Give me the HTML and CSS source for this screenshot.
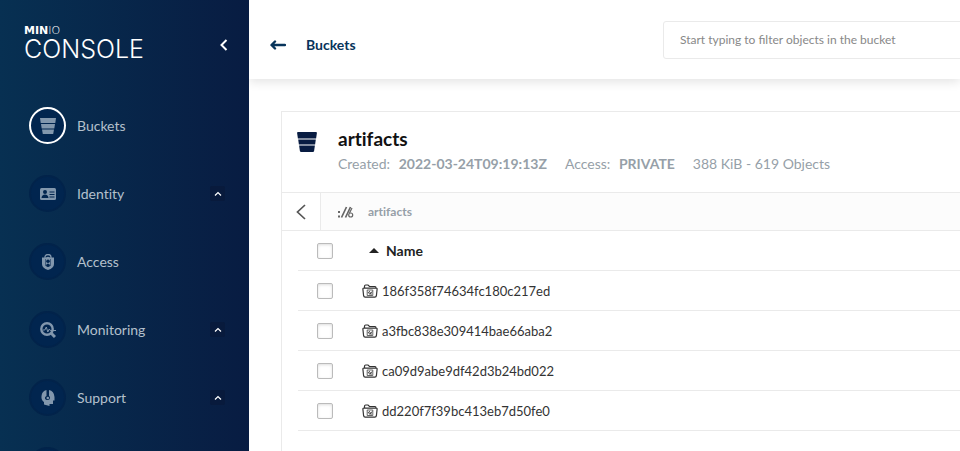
FILE: index.html
```html
<!DOCTYPE html>
<html lang="en">
<head>
<meta charset="utf-8">
<title>MinIO Console</title>
<link rel="stylesheet" href="styles.css">
</head>
<body>
<svg class="defs" aria-hidden="true">
  <symbol id="folder" viewBox="0 0 16 14">
    <path d="M2.500 4V2.200Q2.500 1 3.700 1H6l1.500 1.500h5.500Q14 2.500 14 4M1.800 4.200h12.400q1 0 .9 1l-.7 6.500q-.2 1.500-1.600 1.500H3.200q-1.400 0-1.600-1.500L.9 5.200q-.1-1 .9-1z" fill="none" stroke="#333" stroke-width="1.200"/>
    <path d="M5.200 6h5.600v5.500H5.200z" fill="none" stroke="#555" stroke-width=".9"/>
    <path d="M6 8l2 2.500L10 7.500M7 7l2.500 3.500" fill="none" stroke="#333" stroke-width=".9"/>
  </symbol>
  <symbol id="up" viewBox="0 0 8 6"><path d="M1 4.500L4 1.500l3 3" fill="none" stroke="#fff" stroke-width="1.200"/></symbol>
</svg>
<div class="app">
  <aside class="sidebar">
    <div class="brand">
      <div class="logo"><span class="logo-top"><b>MIN</b>IO</span><span class="logo-main">CONSOLE</span></div>
      <button class="collapse" aria-label="Collapse menu"><svg width="8" height="12" viewBox="0 0 8 12"><path d="M6.500 1L1.500 6l5 5" fill="none" stroke="#fff" stroke-width="2"/></svg></button>
    </div>
    <nav class="menu">
      <a class="item active" href="#"><span class="disc"><svg width="16" height="16" viewBox="0 0 16 16" fill="#8297ad"><path d="M0 0h16l-.7 5H.7zM1 6h14l-.7 4.500H1.700zM2 11.500h12L13.200 16H2.800z"/></svg></span><span class="label">Buckets</span></a>
      <a class="item" href="#"><span class="disc"><svg width="16" height="12" viewBox="0 0 16 12"><rect width="16" height="12" rx="1.500" fill="#8297ad"/><g fill="#01254f"><circle cx="5" cy="4" r="2"/><path d="M1.500 10q.3-3.500 3.500-3.500T8.500 10zM9.500 3.500h5v1h-5zM9.500 6h5v1h-5zM9.500 8.500h5v1h-5z"/></g></svg></span><span class="label">Identity</span><span class="toggle"><svg width="8" height="6"><use href="#up"/></svg></span></a>
      <a class="item" href="#"><span class="disc"><svg width="12" height="16" viewBox="0 0 12 16"><path d="M3 4V3a3 2.500 0 0 1 6 0v1" fill="none" stroke="#8297ad" stroke-width="1.300"/><path d="M0 3.500q3 .3 6-.8 3 1.100 6 .8V10q0 4-6 6-6-2-6-6z" fill="#8297ad"/><g fill="#01254f"><circle cx="6" cy="7.200" r="1.800"/><path d="M3.500 5H4v7h-.5zM8 5h.5v7H8zM4 12q0-2.500 2-2.500T8 12q-1 1-2 1t-2-1z"/></g></svg></span><span class="label">Access</span></a>
      <a class="item" href="#"><span class="disc"><svg width="16" height="16" viewBox="0 0 16 16" fill="none" stroke="#8297ad"><circle cx="7" cy="7" r="5.700" stroke-width="2.400"/><path d="M11 11l4 4" stroke-width="3"/><path d="M3 8h1.800l1.500-3 1.500 5L9.300 7l1 1.500H16" stroke-width="1"/></svg></span><span class="label">Monitoring</span><span class="toggle"><svg width="8" height="6"><use href="#up"/></svg></span></a>
      <a class="item" href="#"><span class="disc"><svg width="14" height="16" viewBox="0 0 14 16"><path d="M5.500 0v6q-2 .8-1.500 2.500.8 2 3 1.500 2.300-.4 2-2.500Q8.800 6.300 8 6V0q5 .8 5.500 7v3.500H12V14H8.500v2L3 14.500V12Q0 10 .5 6 1 1 5.500 0z" fill="#8297ad"/><circle cx="6.800" cy="8" r="1.300" fill="#8297ad"/></svg></span><span class="label">Support</span><span class="toggle"><svg width="8" height="6"><use href="#up"/></svg></span></a>
      <a class="item" href="#" aria-label="More"><span class="disc"></span></a>
    </nav>
  </aside>
  <main class="main">
    <header class="topbar">
      <a class="back" href="#"><svg width="16" height="10" viewBox="0 0 16 10"><path d="M15 5H2M5 1.500L1.500 5 5 8.500" fill="none" stroke="#07345b" stroke-width="2.400" stroke-linecap="round" stroke-linejoin="round"/></svg><span>Buckets</span></a>
      <input class="filter" type="text" aria-label="Filter objects" placeholder="Start typing to filter objects in the bucket">
    </header>
    <div class="content">
    <section class="panel">
      <div class="summary">
        <svg width="20" height="20" viewBox="0 0 20 20" fill="#081c42"><path d="M1 0h18q1 0 .9 1l-.8 5.500H.9L.1 1Q0 0 1 0zM1.200 7.500h17.600l-.7 5H1.900zM2.100 13.500h15.800l-.8 5.500q-.2 1-1.200 1H4.100q-1 0-1.200-1z"/></svg>
        <div>
          <h1 class="title">artifacts</h1>
          <div class="facts"><span>Created: <strong>2022-03-24T09:19:13Z</strong></span><span>Access: <strong>PRIVATE</strong></span><span>388 KiB - 619 Objects</span></div>
        </div>
      </div>
      <div class="crumbs">
        <button class="up" aria-label="Parent folder"><svg width="10" height="16" viewBox="0 0 10 16"><path d="M9 1L1.500 8 9 15" fill="none" stroke="#555" stroke-width="1.700"/></svg></button>
        <svg class="path-icon" width="17" height="12" viewBox="0 0 17 12" fill="none" stroke="#666"><path d="M1 6h2M1 10.500h2" stroke-width="2"/><path d="M4.500 11.500L9.500 1M8.500 11.500L13.500 1" stroke-width="1.700"/><circle cx="13.700" cy="9" r="2" stroke-width="1.200"/><path d="M12.500 7l2.500-5" stroke-width="1.200"/></svg>
        <a href="#">artifacts</a>
      </div>
      <table class="objects">
        <thead><tr><th class="pick"><input type="checkbox" aria-label="Select all"></th><th><span class="sort"><svg width="10" height="5" viewBox="0 0 10 5"><path d="M0 5l5-5 5 5z" fill="#222"/></svg>Name</span></th></tr></thead>
        <tbody>
          <tr><td class="pick"><input type="checkbox" aria-label="Select 186f358f74634fc180c217ed"></td><td><span class="name"><svg width="16" height="14"><use href="#folder"/></svg>186f358f74634fc180c217ed</span></td></tr>
          <tr><td class="pick"><input type="checkbox" aria-label="Select a3fbc838e309414bae66aba2"></td><td><span class="name"><svg width="16" height="14"><use href="#folder"/></svg>a3fbc838e309414bae66aba2</span></td></tr>
          <tr><td class="pick"><input type="checkbox" aria-label="Select ca09d9abe9df42d3b24bd022"></td><td><span class="name"><svg width="16" height="14"><use href="#folder"/></svg>ca09d9abe9df42d3b24bd022</span></td></tr>
          <tr><td class="pick"><input type="checkbox" aria-label="Select dd220f7f39bc413eb7d50fe0"></td><td><span class="name"><svg width="16" height="14"><use href="#folder"/></svg>dd220f7f39bc413eb7d50fe0</span></td></tr>
        </tbody>
      </table>
    </section>
    </div>
  </main>
</div>
</body>
</html>
```
FILE: styles.css
```css
* { box-sizing: border-box; }
body { margin: 0; font-family: Lato, sans-serif; color: #333; background: #fff; }
a { color: inherit; text-decoration: none; }
button { border: 0; padding: 0; background: none; display: flex; align-items: center; justify-content: center; }
svg { flex: none; display: block; }
.defs { display: none; }
.app { display: flex; height: 100vh; overflow: hidden; }
.sidebar { flex: none; width: 249px; background: linear-gradient(90deg, #073052 0%, #081c42 100%); overflow: hidden; }
.brand { display: flex; justify-content: space-between; align-items: center; height: 90px; padding: 0 20px 0 24px; }
.logo { display: flex; flex-direction: column; padding-bottom: 4px; color: #fff; font-family: Inter, sans-serif; font-weight: 300; }
.logo-top { font-family: "DejaVu Sans", sans-serif; font-size: 11px; line-height: 12px; }
.logo-top b { font-weight: 700; }
.logo-main { font-size: 25px; line-height: 24px; }
.collapse { width: 10px; height: 16px; }
.menu { display: flex; flex-direction: column; gap: 31px; padding: 17px 24px 0 29px; }
.item { display: flex; align-items: center; gap: 11px; height: 37px; color: #b4c0cc; font-size: 14px; }
.disc { flex: none; display: flex; align-items: center; justify-content: center; width: 37px; height: 37px; border: 2px solid #02234a; border-radius: 50%; background: #01254f; }
.active .disc { border-color: #fff; }
.label { flex: 1; font-variant-ligatures: none; }
.toggle { display: flex; align-items: center; justify-content: center; width: 15px; height: 15px; border-radius: 2px; background: #081a3c; }
.main { flex: 1; min-width: 0; overflow: hidden; }
.topbar { display: flex; align-items: center; height: 79px; padding-left: 21px; box-shadow: 0 3px 10px #e4e4e4; }
.back { display: flex; align-items: center; gap: 20px; flex: 1; padding-top: 10px; color: #07345b; font-size: 14px; font-weight: 700; }
.filter { flex: none; width: 330px; height: 38px; margin-right: -33px; padding: 0 16px; border: 1px solid #eaeaea; border-radius: 3px; font: 12px Lato, sans-serif; }
.filter::placeholder { color: #888; opacity: 1; }
.content { padding: 32px 0 0 32px; }
.panel { min-height: 100vh; border: 1px solid #eaeaea; border-right: 0; }
.summary { display: flex; gap: 21px; height: 80px; padding: 15px; }
.summary > svg { margin-top: 5px; }
.title { margin: 0; font-size: 19px; line-height: 24px; color: #111; font-variant-ligatures: none; }
.facts { display: flex; gap: 18px; font-size: 14px; line-height: 26px; color: #969fa8; white-space: nowrap; }
.facts strong { margin-left: 5px; }
.crumbs { display: flex; align-items: center; height: 39px; border: solid #eaeaea; border-width: 1px 0; background: #fcfcfc; color: #969fa8; font-size: 12px; font-weight: 700; font-variant-ligatures: none; }
.up { width: 39px; height: 37px; background: #fff; border-right: 1px solid #eaeaea; }
.path-icon { margin: 0 14px 0 16px; }
.objects { width: calc(100% - 16px); margin-left: 16px; border-collapse: separate; border-spacing: 0; font-size: 13px; }
.objects th, .objects td { height: 40px; padding: 0; text-align: left; border-bottom: 1px solid #eaeaea; }
.objects .pick { width: 64px; }
.pick input { appearance: none; display: block; width: 16px; height: 16px; margin: 0 0 0 19px; border: 1px solid #bbb; border-radius: 2px; background: #fff; box-shadow: inset 0 1px 3px #ddd; }
.name { display: flex; align-items: center; gap: 4px; }
.sort { display: flex; align-items: center; gap: 7px; padding-left: 7px; font-size: 14px; color: #222; }
```
